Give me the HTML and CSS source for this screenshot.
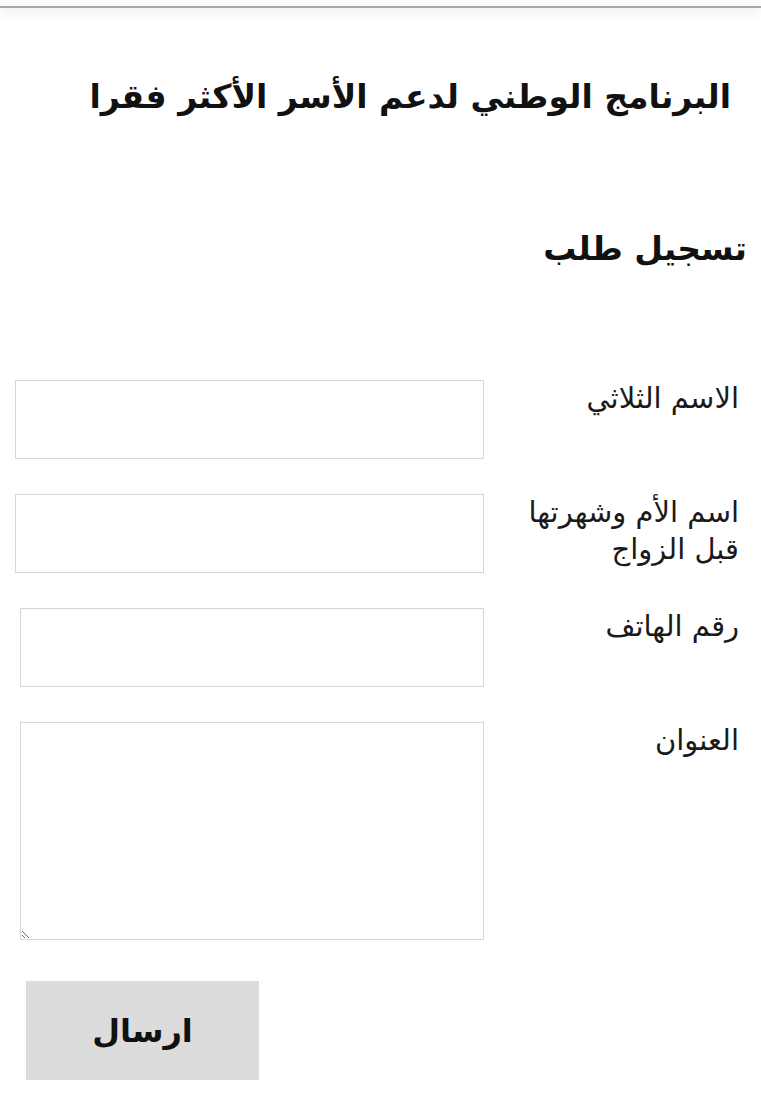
FILE: index.html
```html
<!DOCTYPE html>
<html lang="ar" dir="rtl">
  <head>
    <meta http-equiv="Content-Type" content="text/html; charset=utf-8"/>
    <link rel="stylesheet" href="styles.css">
  </head>
  <body>
    <div class="topbar"></div>
    <h1 class="title">البرنامج الوطني لدعم الأسر الأكثر فقرا</h1>
    <h2 class="subtitle">تسجيل طلب</h2>
    <form class="form">
      <div class="row">
        <label class="label" for="fullname">الاسم الثلاثي</label>
        <input class="field wide" type="text" id="fullname" />
      </div>
      <div class="row">
        <label class="label" for="mother">اسم الأم وشهرتها<br />قبل الزواج</label>
        <input class="field wide" type="text" id="mother" />
      </div>
      <div class="row">
        <label class="label" for="phone">رقم الهاتف</label>
        <input class="field" type="text" id="phone" />
      </div>
      <div class="row">
        <label class="label" for="address">العنوان</label>
        <textarea class="field area" id="address"></textarea>
      </div>
      <div class="actions">
        <button class="send" type="submit">ارسال</button>
      </div>
    </form>
  </body>
</html>
```

FILE: styles.css
```css
body {
  margin: 0px;
  padding: 0px;
  background: white;
  font-family: "DejaVu Sans", sans-serif;
  color: #111111;
}

.topbar {
  margin-top: 6px;
  height: 2px;
  background: #a8a8a8;
  box-shadow: 0px 2px 10px rgba(0, 0, 0, 0.25);
}

.title {
  margin: 69px 30px 0px 0px;
  font-size: 33px;
  font-weight: bold;
  line-height: 40px;
}

.subtitle {
  margin: 112px 14px 0px 0px;
  font-size: 33px;
  font-weight: bold;
  line-height: 40px;
}

.form {
  margin-top: 111px;
}

.row {
  display: flex;
  align-items: flex-start;
  margin-bottom: 35px;
}

.label {
  width: 277px;
  padding-right: 22px;
  box-sizing: border-box;
  font-size: 29px;
  line-height: 37px;
  color: #1a1a1a;
  white-space: nowrap;
}

.field {
  width: 464px;
  height: 79px;
  box-sizing: border-box;
  border: 1px solid #d6d6d6;
  background: white;
  margin: 0px;
  padding: 4px;
  font-family: inherit;
}

.field.wide {
  width: 469px;
}

.field.area {
  height: 218px;
  resize: both;
}

.actions {
  padding-top: 6px;
  padding-left: 26px;
  display: flex;
  justify-content: flex-end;
}

.send {
  width: 233px;
  height: 99px;
  border: none;
  background: #dcdcdc;
  font-family: inherit;
  font-size: 32px;
  font-weight: bold;
  color: #111111;
}
```
